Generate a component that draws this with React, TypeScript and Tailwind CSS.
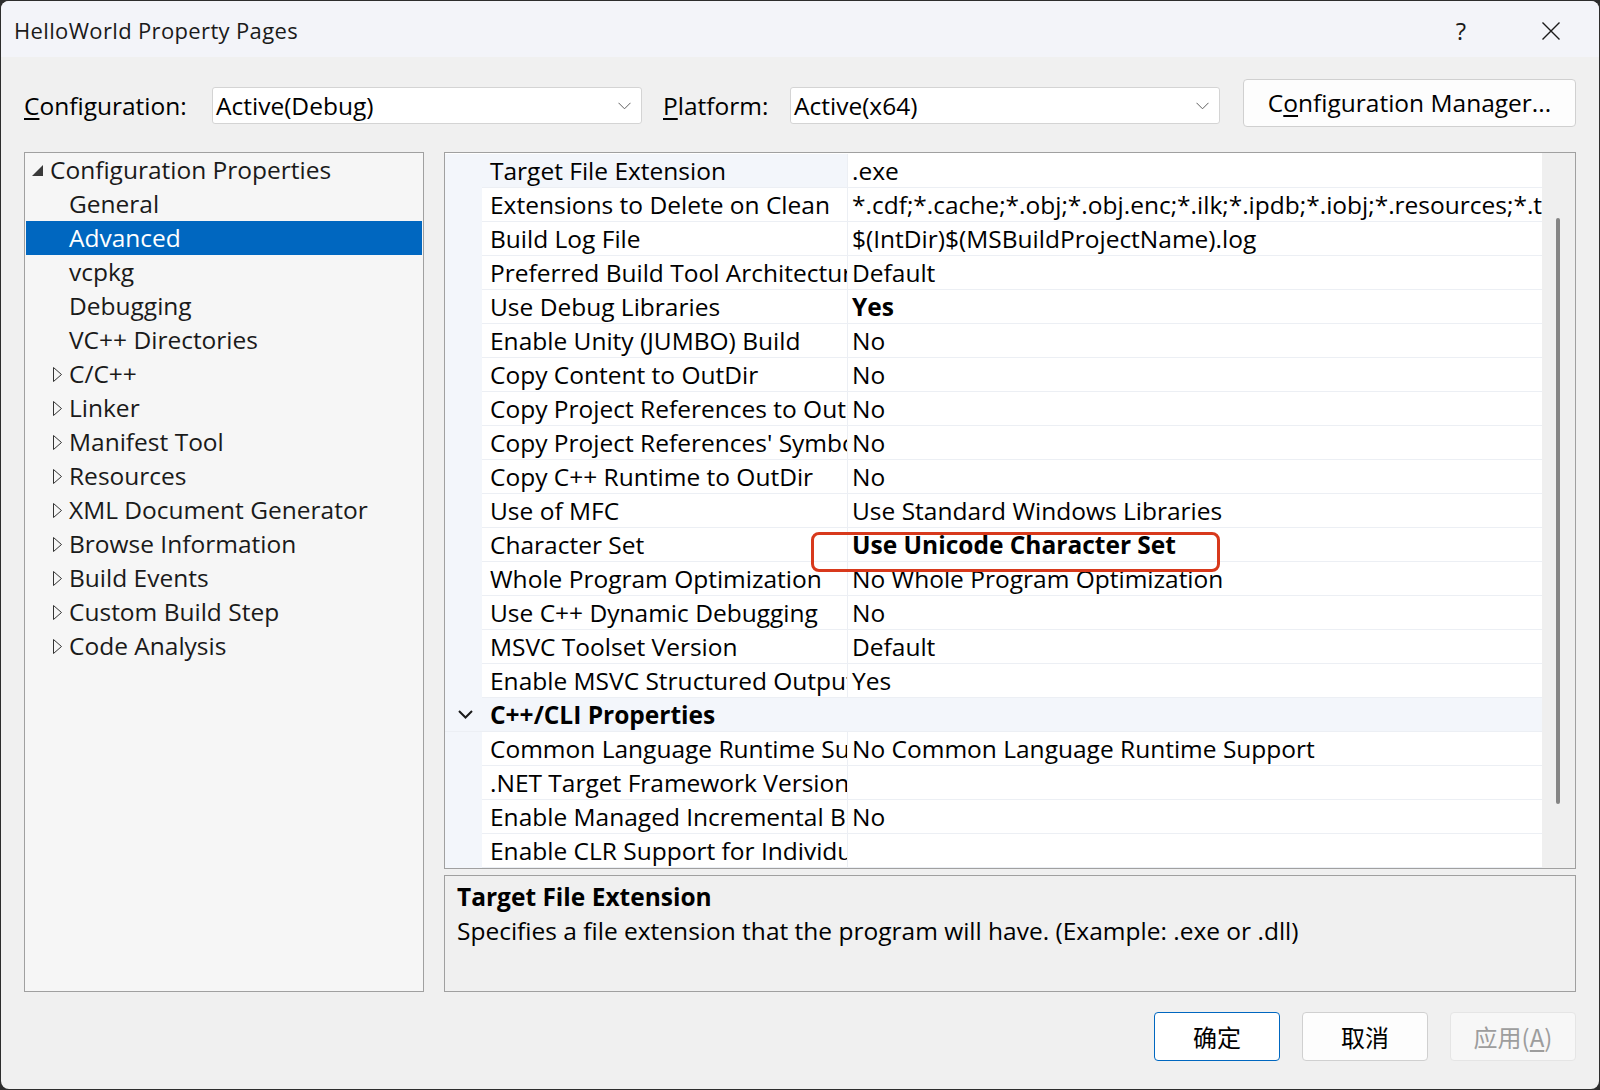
import React from "react";

const FONT = "font-['Open_Sans',sans-serif]";
const CJK = "font-['Noto_Sans_CJK_SC',sans-serif]";

type Prop = { name: string; value: string; bold?: boolean; selected?: boolean };

const advanced: Prop[] = [
  { name: "Target File Extension", value: ".exe", selected: true },
  {
    name: "Extensions to Delete on Clean",
    value:
      "*.cdf;*.cache;*.obj;*.obj.enc;*.ilk;*.ipdb;*.iobj;*.resources;*.tlb;*.tli;*.tlh;*.tmp;*.rsp;*.pgc;*.pgd;*.meta;*.tlog;*.manifest;*.res;*.pch;*.exp;*.idb",
  },
  { name: "Build Log File", value: "$(IntDir)$(MSBuildProjectName).log" },
  { name: "Preferred Build Tool Architecture", value: "Default" },
  { name: "Use Debug Libraries", value: "Yes", bold: true },
  { name: "Enable Unity (JUMBO) Build", value: "No" },
  { name: "Copy Content to OutDir", value: "No" },
  { name: "Copy Project References to OutDir", value: "No" },
  { name: "Copy Project References' Symbols to OutDir", value: "No" },
  { name: "Copy C++ Runtime to OutDir", value: "No" },
  { name: "Use of MFC", value: "Use Standard Windows Libraries" },
  { name: "Character Set", value: "Use Unicode Character Set", bold: true },
  { name: "Whole Program Optimization", value: "No Whole Program Optimization" },
  { name: "Use C++ Dynamic Debugging", value: "No" },
  { name: "MSVC Toolset Version", value: "Default" },
  { name: "Enable MSVC Structured Output", value: "Yes" },
];

const cli: Prop[] = [
  { name: "Common Language Runtime Support", value: "No Common Language Runtime Support" },
  { name: ".NET Target Framework Version", value: "" },
  { name: "Enable Managed Incremental Build", value: "No" },
  { name: "Enable CLR Support for Individual Files", value: "" },
];

const treeItems: { label: string; expandable?: boolean; selected?: boolean }[] = [
  { label: "General" },
  { label: "Advanced", selected: true },
  { label: "vcpkg" },
  { label: "Debugging" },
  { label: "VC++ Directories" },
  { label: "C/C++", expandable: true },
  { label: "Linker", expandable: true },
  { label: "Manifest Tool", expandable: true },
  { label: "Resources", expandable: true },
  { label: "XML Document Generator", expandable: true },
  { label: "Browse Information", expandable: true },
  { label: "Build Events", expandable: true },
  { label: "Custom Build Step", expandable: true },
  { label: "Code Analysis", expandable: true },
];

function Chevron() {
  return (
    <svg width="13" height="8" viewBox="0 0 13 8" className="shrink-0">
      <path d="M0.5 0.8 L6.5 6.8 L12.5 0.8" fill="none" stroke="#5f5f5f" strokeWidth="1" />
    </svg>
  );
}

function Dropdown({ value }: { value: string }) {
  return (
    <div className="mt-[8px] flex h-[37px] items-center justify-between rounded-[3px] border border-[#d4d4d4] bg-white pl-[3px] pr-[10px] text-[24.5px] text-black">
      <span className="leading-[35px]">{value}</span>
      <Chevron />
    </div>
  );
}

function PropRow({ p }: { p: Prop }) {
  return (
    <div className="flex h-[34px] shrink-0">
      <div className="w-[37px] shrink-0 bg-[#f3f6fb]" />
      <div
        className={`w-[366px] shrink-0 overflow-hidden whitespace-nowrap border-b border-r border-[#eceff4] pl-[8px] leading-[33px] ${
          p.selected ? "bg-[#f3f6fb]" : "bg-white"
        }`}
      >
        {p.name}
      </div>
      <div
        className={`min-w-0 flex-1 overflow-hidden whitespace-nowrap border-b border-[#eceff4] pl-[4px] leading-[33px] ${
          p.bold ? "font-bold" : ""
        }`}
      >
        {p.value}
      </div>
    </div>
  );
}

function FooterButton({ children, kind }: { children: React.ReactNode; kind: "primary" | "normal" | "disabled" }) {
  const look =
    kind === "primary"
      ? "border-[#0067c0] bg-white text-black"
      : kind === "normal"
      ? "border-[#d0d0d0] bg-[#fdfdfd] text-black"
      : "border-[#e5e5e5] bg-[#f7f7f7] text-[#9d9d9d]";
  return (
    <div className={`flex h-[49px] w-[126px] items-center justify-center rounded-[4px] border text-[24px] ${CJK} ${look}`}>
      {children}
    </div>
  );
}

export default function App() {
  return (
    <div className={`h-[1090px] w-[1600px] bg-[#2d2d2d] p-px ${FONT}`}>
      <div className="flex h-[1088px] w-[1598px] flex-col overflow-hidden rounded-[8px] bg-[#f0f0f0] text-black">
        {/* title bar */}
        <div className="flex h-[56px] shrink-0 items-center bg-[#f3f4f9] pl-[13px] pr-[38px] pt-[3px]">
          <span className="text-[22px] tracking-[0.35px] text-[#1a1a1a]">HelloWorld Property Pages</span>
          <span className="ml-auto w-[20px] text-center text-[24px] text-[#1a1a1a]">?</span>
          <svg width="20" height="20" viewBox="0 0 20 20" className="ml-[70px]">
            <path d="M1.5 1.5 L18.5 18.5 M18.5 1.5 L1.5 18.5" stroke="#1a1a1a" strokeWidth="1.4" />
          </svg>
        </div>

        <div className="flex flex-1 flex-col px-[23px] pt-[22px]">
          {/* configuration row */}
          <div className="flex h-[48px] items-start text-[24.5px]">
            <div className="mt-[8px] h-[37px] w-[188px] shrink-0 leading-[37px]">
              <u className="underline-offset-[3px]">C</u>onfiguration:
            </div>
            <div className="w-[430px] shrink-0">
              <Dropdown value="Active(Debug)" />
            </div>
            <div className="ml-[21px] mt-[8px] h-[37px] w-[127px] shrink-0 leading-[37px]">
              <u className="underline-offset-[3px]">P</u>latform:
            </div>
            <div className="w-[430px] shrink-0">
              <Dropdown value="Active(x64)" />
            </div>
            <div className="ml-[23px] flex h-[48px] flex-1 items-center justify-center rounded-[4px] border border-[#d0d0d0] bg-[#fdfdfd]">
              C<u className="underline-offset-[3px]">o</u>nfiguration Manager...
            </div>
          </div>

          {/* main area */}
          <div className="mt-[25px] flex h-[840px] gap-[20px] text-[24.5px]">
            {/* tree */}
            <div className="h-[840px] w-[400px] shrink-0 border border-[#a0a0a0] bg-[#f6f6f6] px-px">
              <div className="flex h-[34px] items-center pl-[6px] text-[#1a1a1a]">
                <svg width="11" height="11" viewBox="0 0 11 11" className="mr-[7px] shrink-0">
                  <polygon points="11,0 11,11 0,11" fill="#3a3a3a" />
                </svg>
                <span className="leading-[34px]">Configuration Properties</span>
              </div>
              {treeItems.map((t) => (
                <div
                  key={t.label}
                  className={`flex h-[34px] items-center pl-[27px] ${
                    t.selected ? "bg-[#0067c0] text-white" : "text-[#1a1a1a]"
                  }`}
                >
                  <div className="mr-[7px] w-[9px] shrink-0">
                    {t.expandable && (
                      <svg width="9" height="15" viewBox="0 0 9 15">
                        <polygon points="0.5,0.5 8.5,7.5 0.5,14.5" fill="none" stroke="#333333" strokeWidth="1" />
                      </svg>
                    )}
                  </div>
                  <span className="leading-[34px]">{t.label}</span>
                </div>
              ))}
            </div>

            {/* property grid + description */}
            <div className="flex min-w-0 flex-1 flex-col gap-[6px]">
              <div className="relative flex h-[717px] shrink-0 border border-[#a0a0a0] bg-white">
                <div className="flex min-w-0 flex-1 flex-col overflow-hidden pt-px">
                  {advanced.map((p) => (
                    <PropRow key={p.name} p={p} />
                  ))}
                  <div className="flex h-[34px] shrink-0 items-center border-b border-[#eceff4] bg-[#f3f6fb]">
                    <div className="w-[37px] shrink-0 pl-[13px]">
                      <svg width="15" height="9" viewBox="0 0 15 9">
                        <path d="M1 1 L7.5 7.5 L14 1" fill="none" stroke="#1a1a1a" strokeWidth="2" />
                      </svg>
                    </div>
                    <span className="pl-[8px] font-bold leading-[33px]">C++/CLI Properties</span>
                  </div>
                  {cli.map((p) => (
                    <PropRow key={p.name} p={p} />
                  ))}
                </div>
                <div className="w-[33px] shrink-0 bg-[#efefef] pl-[14px] pt-[65px]">
                  <div className="h-[586px] w-[4px] rounded-full bg-[#858585]" />
                </div>
                <div className="pointer-events-none absolute left-[366px] top-[379px] h-[40px] w-[409px] rounded-[8px] border-[3px] border-[#d8391c]" />
              </div>

              <div className="h-[117px] shrink-0 border border-[#a0a0a0] bg-[#f0f0f0] pl-[12px] pt-[4px] leading-[34px]">
                <div className="font-bold">Target File Extension</div>
                <div>Specifies a file extension that the program will have. (Example: .exe or .dll)</div>
              </div>
            </div>
          </div>

          {/* footer buttons */}
          <div className="mt-[20px] flex justify-end gap-[22px]">
            <FooterButton kind="primary">确定</FooterButton>
            <FooterButton kind="normal">取消</FooterButton>
            <FooterButton kind="disabled">
              <span>
                应用(<u className="underline-offset-[3px]">A</u>)
              </span>
            </FooterButton>
          </div>
        </div>
      </div>
    </div>
  );
}
